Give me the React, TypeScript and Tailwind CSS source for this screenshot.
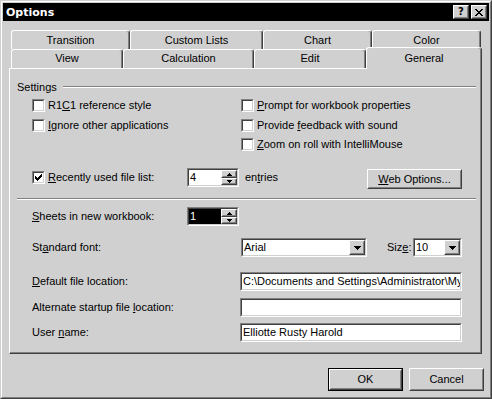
import React from 'react';

const CHECK_COLS = [2, 3, 4, 3, 2, 1, 0];
const X_ROWS = ['XX....XX', '.XX..XX.', '..XXXX..', '...XX...', '..XXXX..', '.XX..XX.', 'XX....XX'];

function U({ children }: { children: React.ReactNode }) {
  return <span className="underline">{children}</span>;
}

function Raised({ className = '', children }: { className?: string; children?: React.ReactNode }) {
  return <div className={`bg-[#d0d0d0] border border-t-white border-l-white border-r-[#404040] border-b-[#404040] ${className}`}>
      <div className="w-full h-full border border-t-[#d0d0d0] border-l-[#d0d0d0] border-r-[#808080] border-b-[#808080] flex items-center justify-center">
        {children}
      </div>
    </div>;
}

function Sunken({ className = '', inner = 'bg-white', children }: { className?: string; inner?: string; children?: React.ReactNode }) {
  return <div className={`border border-t-[#808080] border-l-[#808080] border-r-white border-b-white ${className}`}>
      <div className={`w-full h-full border border-t-[#404040] border-l-[#404040] border-r-[#d0d0d0] border-b-[#d0d0d0] flex items-center overflow-hidden ${inner}`}>
        {children}
      </div>
    </div>;
}

function Check({ checked = false }: { checked?: boolean }) {
  return <Sunken className="w-[13px] h-[13px] shrink-0" inner="bg-white justify-center">
      {checked && <svg width="7" height="7" viewBox="0 0 7 7" shapeRendering="crispEdges">
          {CHECK_COLS.map((y, x) => <rect key={x} x={x} y={y} width="1" height="3" fill="black" />)}
        </svg>}
    </Sunken>;
}

function CheckRow({ checked, children }: { checked?: boolean; children: React.ReactNode }) {
  return <div className="flex items-center h-[13px]">
      <Check checked={checked} />
      <span className="ml-[3px] leading-[13px] whitespace-nowrap">{children}</span>
    </div>;
}

function Arrow({ up }: { up?: boolean }) {
  return <svg width="7" height="4" viewBox="0 0 7 4" shapeRendering="crispEdges">
      {[0, 1, 2, 3].map(i => <rect key={i} x={i} y={up ? 3 - i : i} width={7 - i * 2} height="1" fill="black" />)}
    </svg>;
}

function SmallArrow({ up }: { up?: boolean }) {
  return <svg width="5" height="3" viewBox="0 0 5 3" shapeRendering="crispEdges">
      {[0, 1, 2].map(i => <rect key={i} x={i} y={up ? 2 - i : i} width={5 - i * 2} height="1" fill="black" />)}
    </svg>;
}

function Spinner({ value, selected }: { value: string; selected?: boolean }) {
  return <Sunken className="w-[52px] h-[19px]" inner="bg-white">
      <div className={`flex-1 h-full flex items-center pl-[1px] ${selected ? 'bg-black text-white' : ''}`}>
        <span className="leading-[13px]">{value}</span>
      </div>
      <div className="w-[16px] h-full flex flex-col">
        <Raised className="h-[8px] w-full"><SmallArrow up /></Raised>
        <Raised className="h-[7px] w-full"><SmallArrow /></Raised>
      </div>
    </Sunken>;
}

function Dropdown({ className, value }: { className: string; value: string }) {
  return <Sunken className={`${className} h-[19px]`} inner="bg-white">
      <span className="flex-1 pl-[1px] leading-[13px]">{value}</span>
      <Raised className="w-[16px] h-full"><Arrow /></Raised>
    </Sunken>;
}

function Field({ value }: { value: string }) {
  return <Sunken className="w-[222px] h-[19px]" inner="bg-white">
      <span className="pl-[1px] leading-[13px] whitespace-nowrap">{value}</span>
    </Sunken>;
}

function TabLabel({ className, children }: { className: string; children: React.ReactNode }) {
  return <div className={`${className} border-t border-l border-r border-t-white border-l-white border-r-[#404040] rounded-t-[3px] shadow-[inset_-1px_0_0_#808080] text-center leading-[13px] bg-[#d0d0d0]`}>
      {children}
    </div>;
}

export default function App() {
  return <div className="w-[492px] h-[399px] bg-[#d0d0d0] text-black text-[11px] font-['Liberation_Sans',Arial,sans-serif] border border-t-[#d0d0d0] border-l-[#d0d0d0] border-r-[#404040] border-b-[#404040]">
      <div className="h-full border border-t-white border-l-white border-r-[#808080] border-b-[#808080] p-[1px]">
        <div className="h-[18px] bg-black flex items-center pl-[3px] pr-[2px]">
          <span className="text-white font-bold font-['DejaVu_Sans',sans-serif] text-[11px] leading-[13px]">Options</span>
          <div className="ml-auto flex gap-[2px]">
            <Raised className="w-[16px] h-[14px]">
              <span className="text-black font-bold font-['DejaVu_Sans',sans-serif] text-[10px] leading-[10px]">?</span>
            </Raised>
            <Raised className="w-[16px] h-[14px]">
              <svg width="8" height="7" viewBox="0 0 8 7" shapeRendering="crispEdges">
                {X_ROWS.map((row, y) => row.split('').map((c, x) => c === 'X' ? <rect key={`${x}-${y}`} x={x} y={y} width="1" height="1" fill="black" /> : null))}
              </svg>
            </Raised>
          </div>
        </div>

        <div className="pl-[6px] pr-[5px] pt-[9px]">
          <div className="flex ml-[2px]">
            <TabLabel className="w-[119px] h-[19px] pt-[3px]">Transition</TabLabel>
            <TabLabel className="w-[133px] h-[19px] pt-[3px]">Custom Lists</TabLabel>
            <TabLabel className="w-[109px] h-[19px] pt-[3px]">Chart</TabLabel>
            <TabLabel className="w-[109px] h-[19px] pt-[3px]">Color</TabLabel>
          </div>
          <div className="flex ml-[2px] h-[19px]">
            <TabLabel className="w-[112px] h-[19px] pt-[2px]">View</TabLabel>
            <TabLabel className="w-[131px] h-[19px] pt-[2px]">Calculation</TabLabel>
            <TabLabel className="w-[112px] h-[19px] pt-[2px]">Edit</TabLabel>
            <TabLabel className="w-[116px] h-[22px] -mt-[2px] pt-[4px] relative z-10">General</TabLabel>
          </div>

          <div className="w-[473px] h-[286px] border border-t-white border-l-white border-r-[#404040] border-b-[#404040]">
            <div className="h-full border-r border-b border-r-[#808080] border-b-[#808080] pl-[7px] pr-[4px] pt-[11px]">
              <div className="flex items-center h-[14px] gap-[6px]">
                <span className="leading-[13px]">Settings</span>
                <div className="flex-1 h-[2px] border-t border-b border-t-[#808080] border-b-white" />
              </div>

              <div className="flex ml-[15px] mt-[5px]">
                <div className="w-[209px]">
                  <CheckRow>R1<U>C</U>1 reference style</CheckRow>
                  <div className="mt-[7px]"><CheckRow><U>I</U>gnore other applications</CheckRow></div>
                </div>
                <div>
                  <CheckRow><U>P</U>rompt for workbook properties</CheckRow>
                  <div className="mt-[7px]"><CheckRow>Provide <U>f</U>eedback with sound</CheckRow></div>
                  <div className="mt-[6px]"><CheckRow><U>Z</U>oom on roll with IntelliMouse</CheckRow></div>
                </div>
              </div>

              <div className="flex items-center h-[19px] ml-[15px] mt-[17px]">
                <div className="w-[155px]"><CheckRow checked><U>R</U>ecently used file list:</CheckRow></div>
                <Spinner value="4" />
                <span className="ml-[6px] leading-[13px]">en<U>t</U>ries</span>
                <Raised className="ml-auto mr-[14px] self-start mt-[1px] w-[95px] h-[20px]">
                  <span className="leading-[13px]"><U>W</U>eb Options...</span>
                </Raised>
              </div>

              <div className="mt-[11px] h-[2px] border-t border-b border-t-[#808080] border-b-white" />

              <div className="flex items-center h-[19px] ml-[15px] mt-[7px]">
                <span className="w-[155px] leading-[13px]"><U>S</U>heets in new workbook:</span>
                <Spinner value="1" selected />
              </div>

              <div className="flex items-center h-[19px] ml-[15px] mt-[12px]">
                <span className="w-[209px] leading-[13px]">St<U>a</U>ndard font:</span>
                <Dropdown className="w-[126px]" value="Arial" />
                <span className="ml-[20px] w-[26px] leading-[13px]">Siz<U>e</U>:</span>
                <Dropdown className="w-[49px]" value="10" />
              </div>

              <div className="flex items-center h-[19px] ml-[15px] mt-[15px]">
                <span className="w-[208px] leading-[13px]"><U>D</U>efault file location:</span>
                <Field value="C:\Documents and Settings\Administrator\My Documents" />
              </div>
              <div className="flex items-center h-[19px] ml-[15px] mt-[7px]">
                <span className="w-[208px] leading-[13px]">Alternate startup file <U>l</U>ocation:</span>
                <Field value="" />
              </div>
              <div className="flex items-center h-[19px] ml-[15px] mt-[6px]">
                <span className="w-[208px] leading-[13px]">User <U>n</U>ame:</span>
                <Field value="Elliotte Rusty Harold" />
              </div>
            </div>
          </div>

          <div className="flex justify-end gap-[6px] mt-[14px]">
            <div className="w-[75px] h-[23px] border border-black">
              <Raised className="w-full h-full"><span className="leading-[13px]">OK</span></Raised>
            </div>
            <Raised className="w-[75px] h-[23px]"><span className="leading-[13px]">Cancel</span></Raised>
          </div>
        </div>
      </div>
    </div>;
}
